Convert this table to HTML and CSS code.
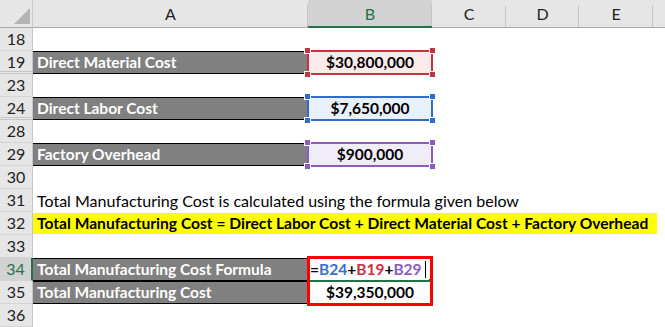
FILE: index.html
```html
<!DOCTYPE html>
<html>
<head>
<meta charset="utf-8">
<link rel="stylesheet" href="styles.css">
</head>
<body>
<div class="sheet">
  <div class="corner"><span class="tri"></span></div>
  <div class="colh">A</div>
  <div class="colh sel">B</div>
  <div class="colh">C</div>
  <div class="colh">D</div>
  <div class="colh">E</div>
  <div class="colh last"></div>

  <div class="rowh">18</div><div class="row-rest"></div>

  <div class="rowh hid">19</div>
  <div class="label">Direct Material Cost</div>
  <div class="val red"><span class="h tl"></span><span class="h tr"></span><span class="h bl"></span><span class="h br"></span>$30,800,000</div>
  <div class="fill"></div>

  <div class="rowh">23</div><div class="row-rest"></div>

  <div class="rowh hid">24</div>
  <div class="label">Direct Labor Cost</div>
  <div class="val blue"><span class="h tl"></span><span class="h tr"></span><span class="h bl"></span><span class="h br"></span>$7,650,000</div>
  <div class="fill"></div>

  <div class="rowh">28</div><div class="row-rest"></div>

  <div class="rowh">29</div>
  <div class="label">Factory Overhead</div>
  <div class="val purple"><span class="h tl"></span><span class="h tr"></span><span class="h bl"></span><span class="h br"></span>$900,000</div>
  <div class="fill"></div>

  <div class="rowh">30</div><div class="row-rest"></div>

  <div class="rowh">31</div>
  <div class="text">Total Manufacturing Cost is calculated using the formula given below</div>

  <div class="rowh">32</div>
  <div class="text yellow">Total Manufacturing Cost = Direct Labor Cost + Direct Material Cost + Factory Overhead</div>

  <div class="rowh">33</div><div class="row-rest"></div>

  <div class="rowh active">34</div>
  <div class="label top">Total Manufacturing Cost Formula</div>
  <div class="formula"><span class="box"></span><span class="k">=</span><span class="rb">B24</span><span class="k">+</span><span class="rr">B19</span><span class="k">+</span><span class="rp">B29</span><span class="caret"></span><span class="edit"></span></div>
  <div class="fill"></div>

  <div class="rowh">35</div>
  <div class="label">Total Manufacturing Cost</div>
  <div class="total">$39,350,000</div>
  <div class="fill"></div>

  <div class="rowh">36</div><div class="row-rest"></div>
</div>
</body>
</html>
```
FILE: styles.css
```css
html, body {
  margin: 0;
  padding: 0;
  background: #ffffff;
}
body {
  font-family: Lato, "Open Sans", sans-serif;
  color: #000;
  overflow: hidden;
}
.sheet {
  display: grid;
  grid-template-columns: 33px 275px 124px 74px 73px 74px 12px;
  grid-template-rows: 28px repeat(13, 23px);
  width: 665px;
  height: 327px;
}
.corner {
  position: relative;
  background: #e6e6e6;
  border-right: 1px solid #c9c9c9;
  border-bottom: 1px solid #ababab;
  box-sizing: border-box;
}
.tri {
  position: absolute;
  right: 2px;
  bottom: 3px;
  width: 0;
  height: 0;
  border-style: solid;
  border-width: 0 0 16px 16px;
  border-color: transparent transparent #b4b4b4 transparent;
}
.colh {
  background: #e6e6e6;
  border-bottom: 1px solid #ababab;
  box-sizing: border-box;
  font-size: 16px;
  text-align: center;
  line-height: 27px;
  color: #222;
  position: relative;
}
.colh::after {
  content: "";
  position: absolute;
  right: 0;
  top: 5px;
  bottom: 0;
  width: 1px;
  background: #c6c6c6;
}
.colh.last::after { display: none; }
.colh.sel {
  background: #d2d2d2;
  color: #217346;
  border-bottom: 2px solid #217346;
}
.rowh {
  grid-column: 1;
  background: #e6e6e6;
  border-right: 1px solid #c6c6c6;
  border-bottom: 1px solid #d4d4d4;
  box-sizing: border-box;
  font-size: 16px;
  text-align: center;
  line-height: 22px;
  color: #222;
}
.rowh.hid {
  border-bottom: 3px double #c6c6c6;
  line-height: 21px;
}
.rowh.active {
  background: #d2d2d2;
  color: #217346;
  border-right: 2px solid #217346;
}
.row-rest {
  grid-column: 2 / -1;
}
.fill {
  grid-column: 4 / -1;
}
.label {
  grid-column: 2;
  background: #808080;
  color: #fff;
  font-weight: 700;
  font-size: 15.5px;
  line-height: 21px;
  padding-left: 4px;
  border-top: 1px solid #000;
  border-bottom: 1px solid #000;
  border-right: 1px solid #000;
  box-sizing: border-box;
  white-space: nowrap;
}
.val {
  grid-column: 3;
  position: relative;
  font-weight: 700;
  font-size: 15.5px;
  line-height: 23px;
  text-align: center;
  z-index: 1;
}
.val::before {
  content: "";
  position: absolute;
  left: -1px;
  right: -1px;
  top: -1px;
  bottom: -1px;
  border: 2px solid var(--c);
  background: var(--bg);
  z-index: -1;
}
.h {
  position: absolute;
  width: 5px;
  height: 5px;
  background: var(--c);
  border: 1px solid #fff;
}
.h.tl { left: -4px; top: -4px; }
.h.tr { right: -4px; top: -4px; }
.h.bl { left: -4px; bottom: -4px; }
.h.br { right: -4px; bottom: -4px; }
.red { --c: #c4343f; --bg: #fbeaea; }
.blue { --c: #2f6ccc; --bg: #e8f0fb; }
.purple { --c: #8b5cbd; --bg: #f1edf8; }
.text {
  grid-column: 2 / -1;
  font-size: 16px;
  line-height: 23px;
  padding-left: 4px;
  white-space: nowrap;
}
.text.yellow {
  grid-column: 2 / -1;
  background: #ffff00;
  font-size: 15.6px;
  font-weight: 700;
  margin-right: 8px;
  margin-top: 1px;
  margin-bottom: 1px;
  line-height: 21px;
}
.formula {
  grid-column: 3;
  position: relative;
  font-weight: 700;
  font-size: 15.5px;
  line-height: 23px;
  padding-left: 2px;
  white-space: nowrap;
}
.k { color: #000; }
.rb { color: #3a6fcb; }
.rr { color: #c9333f; }
.rp { color: #8b5cbd; }
.caret {
  display: inline-block;
  width: 1px;
  height: 17px;
  background: #000;
  vertical-align: -3px;
  margin-left: 3px;
}
.edit {
  position: absolute;
  left: 2px;
  right: 3px;
  bottom: -1px;
  height: 2px;
  background: #217346;
}
.edit::after {
  content: "";
  position: absolute;
  right: -3px;
  top: -1px;
  width: 3px;
  height: 3px;
  background: #217346;
}
.box {
  position: absolute;
  left: -1px;
  top: -2px;
  width: 126px;
  height: 50px;
  border: 3px solid #ff0000;
  box-sizing: border-box;
  z-index: 2;
}
.total {
  grid-column: 3;
  font-weight: 700;
  font-size: 15.5px;
  line-height: 23px;
  text-align: center;
}
```
